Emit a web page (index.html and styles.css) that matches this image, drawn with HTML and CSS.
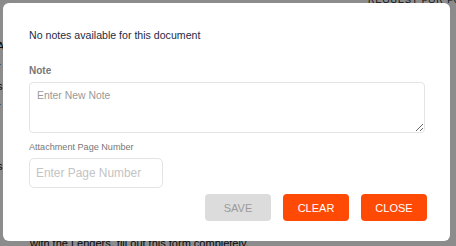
FILE: index.html
```html
<!DOCTYPE html>
<html>
<head>
<meta charset="utf-8">
<link rel="stylesheet" href="styles.css">
</head>
<body>
<div class="page">
  <div class="page-title">REQUEST FOR FORM PROFILE</div>
  <div class="page-side">
    <span>A</span><span>r</span><span>s</span><span>r</span><span>i</span><span>i</span><span>s</span>
  </div>
  <div class="page-foot">with the Lenders, fill out this form completely.</div>
</div>
<div class="overlay"></div>
<div class="modal">
  <p class="empty">No notes available for this document</p>
  <label class="label-strong">Note</label>
  <textarea class="note" placeholder="Enter New Note"></textarea>
  <label class="label-small">Attachment Page Number</label>
  <input class="page-input" type="text" placeholder="Enter Page Number">
  <div class="actions">
    <button class="btn btn-disabled">SAVE</button>
    <button class="btn btn-primary">CLEAR</button>
    <button class="btn btn-primary">CLOSE</button>
  </div>
</div>
</body>
</html>
```
FILE: styles.css
```css
html, body {
  margin: 0;
  padding: 0;
  width: 456px;
  height: 246px;
  overflow: hidden;
  font-family: "Liberation Sans", Arial, sans-serif;
}
.page {
  position: relative;
  width: 456px;
  height: 246px;
  overflow: hidden;
  background: #fff;
  color: #111;
}
.page-title {
  position: absolute;
  left: 368px;
  top: -3px;
  font-size: 9px;
  line-height: 6px;
  letter-spacing: 1px;
  white-space: nowrap;
}
.page-side {
  position: absolute;
  left: -3px;
  top: 40px;
  display: flex;
  flex-direction: column;
  gap: 8px;
  font-size: 11px;
  line-height: 12px;
}
.page-foot {
  position: absolute;
  left: 30px;
  top: 238px;
  font-size: 11px;
  line-height: 10px;
  white-space: nowrap;
}
.overlay {
  position: absolute;
  z-index: 1;
  inset: 0;
  background: rgba(0, 0, 0, 0.45);
}
.modal {
  position: absolute;
  z-index: 2;
  left: 3px;
  top: 3px;
  width: 447px;
  height: 238px;
  box-sizing: border-box;
  background: #fff;
  border-radius: 6px;
  padding: 26px 25px 0 26px;
  display: flex;
  flex-direction: column;
}
.empty {
  margin: 0;
  font-size: 10.6px;
  color: #1d2b45;
  line-height: 13px;
}
.label-strong {
  margin-top: 23px;
  font-size: 10px;
  font-weight: bold;
  color: #777;
  line-height: 12px;
}
.note {
  margin-top: 5px;
  width: 396px;
  height: 51px;
  box-sizing: border-box;
  border: 1px solid #e4e4e4;
  border-radius: 4px;
  padding: 7px 7px;
  font-family: "Liberation Sans", Arial, sans-serif;
  font-size: 10.4px;
  resize: vertical;
  outline: none;
}
.note::placeholder { color: #999; }
.label-small {
  margin-top: 8px;
  font-size: 9.1px;
  color: #777;
  line-height: 12px;
}
.page-input {
  margin-top: 5px;
  width: 134px;
  height: 30px;
  box-sizing: border-box;
  border: 1px solid #e4e4e4;
  border-radius: 5px;
  padding: 0 6px;
  font-family: "Liberation Sans", Arial, sans-serif;
  font-size: 11.9px;
  outline: none;
}
.page-input::placeholder { color: #c4c4c4; }
.actions {
  display: flex;
  justify-content: flex-end;
  gap: 12px;
  margin-top: 6px;
  width: 398px;
}
.btn {
  width: 66px;
  height: 27px;
  border: none;
  border-radius: 4px;
  font-family: "Liberation Sans", Arial, sans-serif;
  font-size: 11px;
  padding: 0;
}
.btn-disabled {
  background: #dcdcdc;
  color: #9b9b9b;
}
.btn-primary {
  background: #ff4a06;
  color: #fff;
}
```
